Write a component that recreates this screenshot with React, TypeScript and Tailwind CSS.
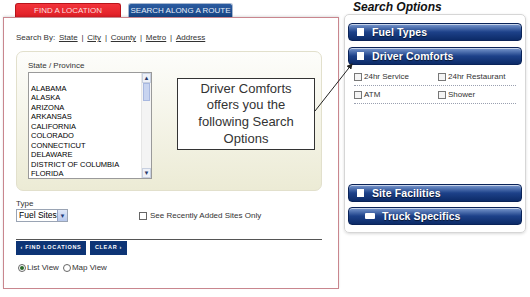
import React from "react";

const states = [
  "",
  "ALABAMA",
  "ALASKA",
  "ARIZONA",
  "ARKANSAS",
  "CALIFORNIA",
  "COLORADO",
  "CONNECTICUT",
  "DELAWARE",
  "DISTRICT OF COLUMBIA",
  "FLORIDA",
];

function Bar({ label, wide }: { label: string; wide?: boolean }) {
  return (
    <div className="h-[18px] rounded-[4px] border border-[#0a2358] bg-gradient-to-b from-[#7d9bd0] via-[#1d4189] to-[#0c2b68] shadow-[inset_0_1px_0_rgba(255,255,255,0.6)] flex items-center pl-[8px]">
      {wide ? (
        <span className="w-[10px] h-[6px] bg-white mr-[7px] ml-[8px] rounded-[1px]" />
      ) : (
        <span className="w-[7px] h-[8px] bg-white mr-[8px]" />
      )}
      <span className="text-white font-bold text-[10.5px] leading-none tracking-[0.1px] [text-shadow:0_1px_1px_rgba(0,0,0,0.6)]">
        {label}
      </span>
    </div>
  );
}

function Check({ label }: { label: string }) {
  return (
    <div className="flex items-center gap-[2px]">
      <span className="w-[8px] h-[8px] border border-[#777] bg-[#f4f4f4]" />
      <span className="text-[8px] text-[#333]">{label}</span>
    </div>
  );
}

export default function App() {
  return (
    <div
      className="relative w-[530px] h-[297px] bg-white flex overflow-hidden"
      style={{ fontFamily: '"Liberation Sans", Arial, sans-serif' }}
    >
      {/* left column */}
      <div className="ml-[3px] w-[336px] flex flex-col">
        <div className="flex pl-[12px] pt-[3px] gap-[7px] h-[17px]">
          <div className="w-[106px] h-[14px] rounded-t-[3px] bg-gradient-to-b from-[#f2333a] to-[#e01e26] border border-[#b8141b] border-b-0 flex items-center justify-center">
            <span className="text-[8px] text-[#fcdede] leading-none">FIND A LOCATION</span>
          </div>
          <div className="w-[105px] h-[14px] rounded-t-[3px] bg-gradient-to-b from-[#2a5ba0] to-[#174585] border border-[#a8b8d0] border-b-0 flex items-center justify-center">
            <span className="text-[8px] text-[#e4ecf8] leading-none">SEARCH ALONG A ROUTE</span>
          </div>
        </div>
        <div className="h-[272px] border border-[#c9868e] shadow-[0_-1px_2px_rgba(0,0,0,0.12)] px-[12px] pt-[15px] flex flex-col">
          <div className="text-[8px] leading-[10px] text-[#333] flex gap-[3.8px]">
            <span>Search By:</span>
            <span className="underline">State</span>
            <span>|</span>
            <span className="underline">City</span>
            <span>|</span>
            <span className="underline">County</span>
            <span>|</span>
            <span className="underline">Metro</span>
            <span>|</span>
            <span className="underline">Address</span>
          </div>
          <div className="mt-[8px] w-[306px] h-[140px] rounded-[7px] border border-[#e2e0cc] bg-gradient-to-b from-[#fdfdfb] to-[#ecebd5] pl-[11px] pt-[9px]">
            <div className="text-[8px] leading-[10px] text-[#333]">State / Province</div>
            <div className="mt-[1px] w-[124px] h-[107px] border border-[#9a9a9a] bg-white flex">
              <div className="flex-1 pl-[2px] pt-[1px]">
                {states.map((s, i) => (
                  <div key={i} className="text-[7.5px] leading-[9.55px] h-[9.55px] text-black">
                    {s}
                  </div>
                ))}
              </div>
              <div className="w-[10px] bg-[#f4f4f4] border-l border-[#e6e6e6] flex flex-col">
                <div className="h-[10px] bg-[#eef1f8] border border-[#c8d0e0] flex items-center justify-center text-[6px] text-[#2a3a6a] leading-none">
                  ▲
                </div>
                <div className="h-[18px] mx-[1px] bg-[#c8d4f0] border border-[#a8b8e0]" />
                <div className="flex-1" />
                <div className="h-[10px] bg-[#eef1f8] border border-[#c8d0e0] flex items-center justify-center text-[6px] text-[#2a3a6a] leading-none">
                  ▼
                </div>
              </div>
            </div>
          </div>
          <div className="mt-[8px] text-[8px] leading-[10px] text-[#333]">Type</div>
          <div className="flex items-center">
            <div className="w-[52px] h-[13px] border border-[#9aa4b4] bg-white flex items-center">
              <span className="flex-1 text-[8.5px] pl-[2px] leading-none text-black">Fuel Sites</span>
              <span className="w-[10px] h-[11px] bg-gradient-to-b from-[#dfe7f8] to-[#b7c8ec] border-l border-[#9aa4c4] flex items-center justify-center text-[6px] text-[#203a7a] leading-none">
                ▼
              </span>
            </div>
            <div className="ml-[71px] flex items-center gap-[3px]">
              <span className="w-[8px] h-[8px] border border-[#666] bg-white" />
              <span className="text-[8px] text-[#333]">See Recently Added Sites Only</span>
            </div>
          </div>
          <div className="mt-[17px] h-px w-[306px] bg-[#555]" />
          <div className="mt-[1px] flex gap-[4px]">
            <div className="w-[70px] h-[14px] bg-[#0d3475] flex items-center justify-center">
              <span className="text-[5.5px] font-bold text-white tracking-[0.7px] leading-none">‹ FIND LOCATIONS</span>
            </div>
            <div className="w-[37px] h-[14px] bg-[#0d3475] flex items-center justify-center">
              <span className="text-[5.5px] font-bold text-white tracking-[0.7px] leading-none">CLEAR ›</span>
            </div>
          </div>
          <div className="mt-[7px] flex items-center text-[8px] text-[#333] pl-[2px]">
            <span className="w-[8px] h-[8px] rounded-full border border-[#666] flex items-center justify-center">
              <span className="w-[4px] h-[4px] rounded-full bg-[#2a6a2a]" />
            </span>
            <span className="ml-[1px]">List View</span>
            <span className="ml-[4px] w-[8px] h-[8px] rounded-full border border-[#666]" />
            <span className="ml-[1px]">Map View</span>
          </div>
        </div>
      </div>

      {/* right column */}
      <div className="ml-[5px] w-[182px] flex flex-col">
        <div className="pl-[9px] h-[14px] text-[12px] font-bold italic text-[#111] leading-[14px]">
          Search Options
        </div>
        <div className="h-[219px] rounded-[5px] border border-[#d6d6d6] shadow-[0_1px_3px_rgba(0,0,0,0.15)] px-[3px] pt-[8px] pb-[7px] flex flex-col">
          <Bar label="Fuel Types" />
          <div className="mt-[6px]">
            <Bar label="Driver Comforts" />
          </div>
          <div className="mt-[3px] mx-[6px]">
            <div className="h-[18px] flex items-center border-b border-dotted border-[#9aa0b0]">
              <div className="w-[84px]">
                <Check label="24hr Service" />
              </div>
              <Check label="24hr Restaurant" />
            </div>
            <div className="h-[18px] flex items-center border-b border-dotted border-[#9aa0b0]">
              <div className="w-[84px]">
                <Check label="ATM" />
              </div>
              <Check label="Shower" />
            </div>
          </div>
          <div className="flex-1" />
          <Bar label="Site Facilities" />
          <div className="mt-[5px]">
            <Bar label="Truck Specifics" wide />
          </div>
        </div>
      </div>

      {/* annotation callout */}
      <div className="absolute left-[177px] top-[78px] w-[138px] h-[72px] border border-[#333] bg-white flex flex-col items-center justify-center text-[13px] leading-[16.6px] text-[#333]">
        <span>Driver Comforts</span>
        <span>offers you the</span>
        <span>following Search</span>
        <span>Options</span>
      </div>
      <svg className="absolute left-0 top-0" width="530" height="297">
        <defs>
          <marker id="ah" markerWidth="6" markerHeight="6" refX="5" refY="3" orient="auto">
            <path d="M0,0 L6,3 L0,6 Z" fill="#222" />
          </marker>
        </defs>
        <line x1="315" y1="111" x2="352" y2="64" stroke="#222" strokeWidth="1" markerEnd="url(#ah)" />
      </svg>
    </div>
  );
}
